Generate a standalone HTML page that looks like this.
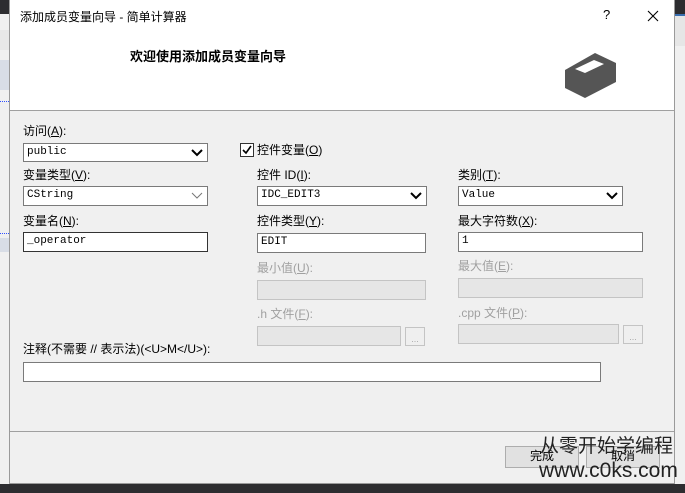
<!DOCTYPE html>
<html><head><meta charset="utf-8"><style>
*{margin:0;padding:0;box-sizing:border-box}
body{width:685px;height:493px;overflow:hidden;position:relative;background:#f0f0f0;font-family:"Liberation Sans","Noto Sans CJK SC",sans-serif;font-size:12px;color:#000}
.a{position:absolute;white-space:nowrap}
.lbl{position:absolute;white-space:nowrap;font-size:12px;line-height:14px}
.dis{color:#a0a0a0}
.box{position:absolute;background:#fff;border:1px solid #7a7a7a;font-family:"Liberation Mono","Noto Sans CJK SC",monospace;font-size:11px;line-height:17px;padding-left:3px}
.db{position:absolute;background:#e6e6e6;border:1px solid #c4c4c4}
.cmb{position:absolute;background:#fff;border:1px solid #7a7a7a;font-family:"Liberation Mono",monospace;font-size:11px;line-height:17px;padding-left:3px}
.cmb svg{position:absolute;right:4px;top:5px}
.btn{position:absolute;background:#e1e1e1;border:1px solid #adadad;text-align:center;line-height:19px}
</style></head><body>
<!-- left strip -->
<div class="a" style="left:0;top:0;width:9px;height:14px;background:#2d2d30"></div>
<div class="a" style="left:0;top:30px;width:9px;height:20px;background:#e8e8e8"></div>
<div class="a" style="left:0;top:60px;width:9px;height:30px;background:#d8dde6"></div>
<div class="a" style="left:0;top:101px;width:9px;height:1px;border-top:1px dotted #3050ff"></div>
<div class="a" style="left:0;top:233px;width:9px;height:1px;border-top:1px dotted #3050ff"></div>
<div class="a" style="left:0;top:238px;width:9px;height:14px;background:#d8dde6"></div>
<!-- right strip -->
<div class="a" style="left:675px;top:0;width:10px;height:14px;background:#2d2d30"></div>
<div class="a" style="left:675px;top:14px;width:10px;height:2px;background:#3a6fb0"></div>
<div class="a" style="left:675px;top:16px;width:10px;height:30px;background:#e6e6e6"></div>
<!-- bottom -->
<div class="a" style="left:0;top:484px;width:685px;height:9px;background:#2d2d30"></div>
<!-- dialog -->
<div class="a" style="left:9px;top:0;width:666px;height:484px;background:#f0f0f0;border:1px solid #9a9a9a;border-top:none"></div>
<div class="a" style="left:10px;top:0;width:664px;height:111px;background:#fff;border-bottom:1px solid #a0a0a0"></div>
<div class="a" style="left:20px;top:8px;font-size:12px">添加成员变量向导 - 简单计算器</div>
<div class="a" style="left:603px;top:7px;font-size:13px">?</div>
<svg class="a" style="left:647px;top:10px" width="12" height="12"><path d="M1 1L11 11M11 1L1 11" stroke="#000" stroke-width="1.1"/></svg>
<div class="a" style="left:130px;top:46px;font-size:13px;font-weight:bold">欢迎使用添加成员变量向导</div>
<svg class="a" style="left:0;top:0" width="685" height="120"><path d="M595 53L616 63L616 82L585 98L565 88L565 70Z" fill="#555"/><path d="M575 69L594 60L604 64L585 73Z" fill="#fff"/></svg>

<div class="lbl" style="left:23px;top:124px">访问(<u>A</u>):</div>
<div class="cmb" style="left:23px;top:143px;width:185px;height:19px">public<svg width="12" height="8"><path d="M1 1L6 6L11 1" stroke="#000" stroke-width="2" fill="none"/></svg></div>
<div class="a" style="left:240px;top:143px;width:14px;height:14px;border:1px solid #333;background:#fff"><svg width="12" height="12" style="position:absolute;left:0;top:0"><path d="M2 6L5 9L10 2" stroke="#000" stroke-width="1.6" fill="none"/></svg></div>
<div class="lbl" style="left:257px;top:143px">控件变量(<u>O</u>)</div>

<div class="lbl" style="left:23px;top:168px">变量类型(<u>V</u>):</div>
<div class="cmb" style="left:23px;top:186px;width:185px;height:20px">CString<svg width="12" height="8"><path d="M1 1L6 6L11 1" stroke="#777" stroke-width="1" fill="none"/></svg></div>
<div class="lbl" style="left:257px;top:168px">控件 ID(<u>I</u>):</div>
<div class="cmb" style="left:257px;top:186px;width:170px;height:20px">IDC_EDIT3<svg width="12" height="8"><path d="M1 1L6 6L11 1" stroke="#000" stroke-width="2" fill="none"/></svg></div>
<div class="lbl" style="left:458px;top:168px">类别(<u>T</u>):</div>
<div class="cmb" style="left:458px;top:186px;width:165px;height:20px">Value<svg width="12" height="8"><path d="M1 1L6 6L11 1" stroke="#000" stroke-width="2" fill="none"/></svg></div>

<div class="lbl" style="left:23px;top:214px">变量名(<u>N</u>):</div>
<div class="box" style="left:23px;top:232px;width:185px;height:20px;border-color:#333">_operator</div>
<div class="lbl" style="left:257px;top:214px">控件类型(<u>Y</u>):</div>
<div class="box" style="left:257px;top:233px;width:169px;height:20px">EDIT</div>
<div class="lbl" style="left:458px;top:214px">最大字符数(<u>X</u>):</div>
<div class="box" style="left:458px;top:232px;width:185px;height:20px">1</div>

<div class="lbl dis" style="left:257px;top:261px">最小值(<u>U</u>):</div>
<div class="db" style="left:257px;top:280px;width:169px;height:20px"></div>
<div class="lbl dis" style="left:458px;top:259px">最大值(<u>E</u>):</div>
<div class="db" style="left:458px;top:278px;width:185px;height:20px"></div>
<div class="lbl dis" style="left:257px;top:307px">.h 文件(<u>F</u>):</div>
<div class="db" style="left:257px;top:326px;width:144px;height:20px"></div>
<div class="db" style="left:405px;top:327px;width:20px;height:19px;background:#efefef;color:#aaa;font-size:9px;text-align:center;line-height:22px">...</div>
<div class="lbl dis" style="left:458px;top:306px">.cpp 文件(<u>P</u>):</div>
<div class="db" style="left:458px;top:324px;width:161px;height:20px"></div>
<div class="db" style="left:623px;top:325px;width:20px;height:19px;background:#efefef;color:#aaa;font-size:9px;text-align:center;line-height:22px">...</div>

<div class="lbl" style="left:23px;top:342px">注释(不需要 // 表示法)(&lt;U&gt;M&lt;/U&gt;):</div>
<div class="box" style="left:23px;top:362px;width:578px;height:20px"></div>

<div class="a" style="left:10px;top:431px;width:664px;height:1px;background:#a0a0a0"></div>
<div class="btn" style="left:505px;top:446px;width:74px;height:22px">完成</div>
<div class="btn" style="left:586px;top:446px;width:74px;height:22px">取消</div>
<div class="a" style="left:540px;top:433px;font-size:19px;color:#222;font-family:'Noto Sans CJK SC',sans-serif;line-height:24px">从零开始学编程</div>
<div class="a" style="left:539px;top:459px;font-size:21px;color:#222;line-height:24px">www.c0ks.com</div>
</body></html>
